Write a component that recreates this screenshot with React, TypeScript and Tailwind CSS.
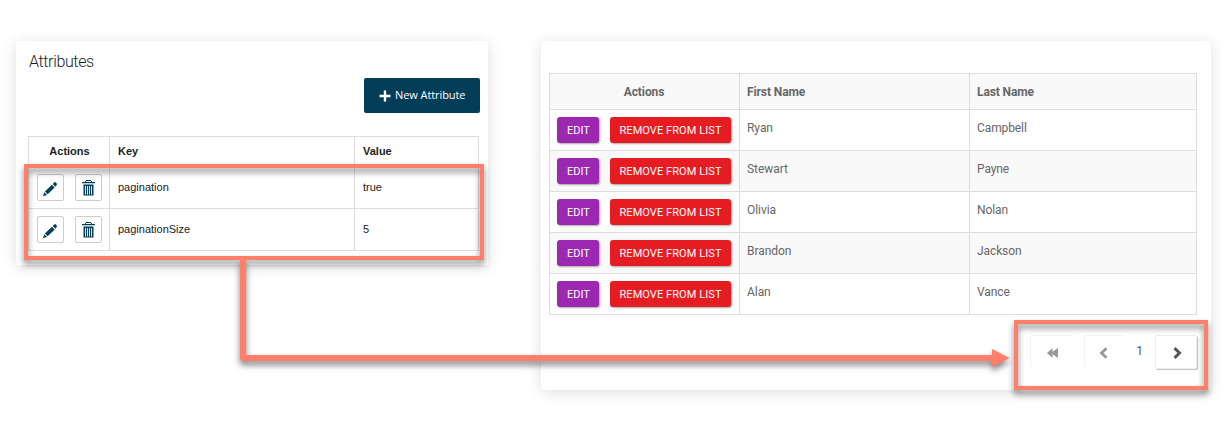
import React from "react";

const attributes = [
  { key: "pagination", value: "true" },
  { key: "paginationSize", value: "5" },
];

const people = [
  ["Ryan", "Campbell"],
  ["Stewart", "Payne"],
  ["Olivia", "Nolan"],
  ["Brandon", "Jackson"],
  ["Alan", "Vance"],
];

function Pencil() {
  return (
    <svg width="17" height="17" viewBox="0 0 17 17" fill="#043d57">
      <path d="M1 16.200l1.300-4 2.700 2.700zM2.900 11.500l7-6.800 2.800 2.800-7 6.800zM10.700 3.900l1.700-1.600h1.100l1.300 1.300v1.100l-1.300 2z" />
    </svg>
  );
}

function Trash() {
  return (
    <svg width="13" height="16" viewBox="0 0 13 16" fill="#043d57">
      <path d="M4 0h5v1H4zM3 1h1v2H3zM9 1h1v2H9zM0 2h13v1.200H0z" />
      <path d="M1.500 4.500h10V15.500h-10z" />
      <path d="M3 6h1v8.500H3zM5 6h1v8.500H5zM7 6h1v8.500H7zM9 6h1v8.500H9z" fill="#e9e1d5" />
    </svg>
  );
}

function IconButton({ children }: { children: React.ReactNode }) {
  return (
    <button className="flex h-[27px] w-[27px] items-center justify-center rounded-[2px] border border-[#ccc] bg-white pt-px">
      {children}
    </button>
  );
}

function AttributesPanel() {
  return (
    <section className="h-[224px] w-[472px] shrink-0 bg-white pl-3 shadow-[0_2px_14px_rgba(0,0,0,0.13)]">
      <h1 className="h-[37px] pt-[9px] pl-px font-['Roboto'] text-[16px] leading-[24px] font-light tracking-[-0.35px] text-[#222]">
        Attributes
      </h1>
      <div className="flex h-[58px] items-start justify-end pr-2">
        <button className="flex h-[35px] w-[116px] items-center rounded-[2px] bg-[#043d57] pl-[15px] font-['Open_Sans',sans-serif] text-[11px] tracking-[-0.08px] text-white">
          <svg width="12" height="12" viewBox="0 0 12 12" className="mr-1 mt-px">
            <path d="M6 .5v11M.5 6h11" stroke="white" strokeWidth="2.4" />
          </svg>
          <span className="whitespace-nowrap">New Attribute</span>
        </button>
      </div>
      <table className="w-[451px] table-fixed border-collapse font-['Liberation_Sans',sans-serif] text-[11px] text-[#222]">
        <colgroup>
          <col className="w-[81px]" />
          <col className="w-[245px]" />
          <col />
        </colgroup>
        <thead>
          <tr className="h-[30px]">
            <th className="border border-[#ddd] p-0 pl-px">Actions</th>
            <th className="border border-[#ddd] p-0 pl-2 text-left">Key</th>
            <th className="border border-[#ddd] p-0 pl-2 text-left">Value</th>
          </tr>
        </thead>
        <tbody>
          {attributes.map((a) => (
            <tr key={a.key} className="h-[42px]">
              <td className="border border-[#ddd] p-0">
                <div className="flex gap-[11px] pl-2">
                  <IconButton><Pencil /></IconButton>
                  <IconButton><Trash /></IconButton>
                </div>
              </td>
              <td className="border border-[#ddd] p-0 pl-2">{a.key}</td>
              <td className="border border-[#ddd] p-0 pl-2">{a.value}</td>
            </tr>
          ))}
        </tbody>
      </table>
    </section>
  );
}

function Pager() {
  return (
    <div className="mt-5 flex h-[34px] pl-[481px]">
      <button className="flex h-[33px] w-[42px] items-center justify-center rounded-[2px] border-t border-l border-[#f3f3f3] pt-px pl-[3px] text-[#999]">
        <svg width="12" height="10" viewBox="0 0 12 10" fill="currentColor">
          <path d="M0 5l5.500-5v3.800L11 0v10L5.500 6.200V10z" />
        </svg>
      </button>
      <button className="ml-3 flex h-[33px] w-[40px] items-center justify-center rounded-[2px] border-t border-l border-[#f3f3f3] pt-px pr-[2px] text-[#999]">
        <svg width="9" height="12" viewBox="0 0 9 12" fill="none" stroke="currentColor" strokeWidth="2.8">
          <path d="M7.500 1.200L2.500 6l5 4.800" />
        </svg>
      </button>
      <span className="w-[31px] pt-[7px] text-center font-['Roboto'] text-[12px] leading-[18px] text-[#555]">1</span>
      <button className="flex h-[34px] w-[42px] items-center justify-center rounded-[2px] border border-[#eee] bg-white pt-px pl-[2px] text-[#555] shadow-[1px_1px_1px_rgba(0,0,0,0.25)]">
        <svg width="9" height="12" viewBox="0 0 9 12" fill="none" stroke="currentColor" strokeWidth="3">
          <path d="M1.500 1.200l5 4.800-5 4.800" />
        </svg>
      </button>
    </div>
  );
}

function PeoplePanel() {
  return (
    <section className="h-[349px] w-[670px] shrink-0 bg-white pt-8 pl-2 font-['Roboto',sans-serif] shadow-[0_2px_14px_rgba(0,0,0,0.13)]">
      <table className="w-[648px] table-fixed border-collapse text-[12px] leading-[18px] text-[#666]">
        <colgroup>
          <col className="w-[190px]" />
          <col className="w-[230px]" />
          <col />
        </colgroup>
        <thead>
          <tr className="h-[36px] bg-[#f9f9f9] tracking-[-0.1px]">
            <th className="border border-[#ddd] p-0 pr-px">Actions</th>
            <th className="border border-[#ddd] p-0 pl-[7px] text-left">First Name</th>
            <th className="border border-[#ddd] p-0 pl-[7px] text-left">Last Name</th>
          </tr>
        </thead>
        <tbody>
          {people.map(([first, last]) => (
            <tr key={first} className="h-[41px] even:bg-[#f9f9f9]">
              <td className="border border-[#ddd] p-0">
                <div className="flex gap-[11px] pl-[7px] text-[11px] text-white">
                  <button className="h-[26px] w-[42px] rounded-[3px] bg-[#9c27b0] pt-[2px] pl-px shadow-[1px_1px_2px_rgba(0,0,0,0.35)]">EDIT</button>
                  <button className="h-[26px] w-[121px] rounded-[3px] bg-[#e61c23] pt-[2px] tracking-[0.08px] whitespace-nowrap shadow-[1px_1px_2px_rgba(0,0,0,0.35)]">REMOVE FROM LIST</button>
                </div>
              </td>
              <td className="border border-[#ddd] p-0 pt-[9px] pl-[7px] align-top tracking-[-0.05px]">{first}</td>
              <td className="border border-[#ddd] p-0 pt-[9px] pl-[7px] align-top tracking-[-0.1px]">{last}</td>
            </tr>
          ))}
        </tbody>
      </table>
      <Pager />
    </section>
  );
}

export default function App() {
  return (
    <main className="relative flex h-[441px] w-[1225px] items-start gap-[53px] overflow-hidden bg-white pt-[41px] pl-4">
      <AttributesPanel />
      <PeoplePanel />
      <svg
        className="pointer-events-none absolute inset-0 drop-shadow-[0_4px_3px_rgba(0,0,0,0.5)]"
        width="1225"
        height="441"
        fill="none"
        stroke="#ff7f6a"
      >
        <rect x="26" y="166" width="456" height="92" strokeWidth="4" />
        <rect x="1016" y="322" width="190" height="66" strokeWidth="4" />
        <path d="M243 259V358H993" strokeWidth="6" strokeLinejoin="round" />
        <path d="M992 349l17.500 9-17.500 9z" fill="#ff7f6a" stroke="none" />
      </svg>
    </main>
  );
}
